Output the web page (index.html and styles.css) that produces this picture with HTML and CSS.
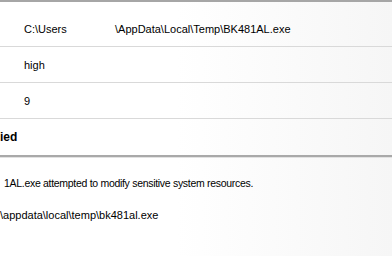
FILE: index.html
```html
<!DOCTYPE html>
<html lang="en">
<head>
  <meta charset="UTF-8">
  <title>Threat Details</title>
  <link rel="stylesheet" href="styles.css">
</head>
<body>

  <div class="details">
    <div class="row">
      <span class="path-user">C:\Users</span>
      <span class="path-rest">\AppData\Local\Temp\BK481AL.exe</span>
    </div>
    <div class="row">high</div>
    <div class="row">9</div>
    <div class="row status">ied</div>
  </div>

  <div class="desc">
    <p class="msg msg-event">1AL.exe attempted to modify sensitive system resources.</p>
    <p class="msg">\appdata\local\temp\bk481al.exe</p>
  </div>

</body>
</html>
```

FILE: styles.css
```css
* {
  box-sizing: border-box;
}

body {
  margin: 0;
  padding: 0;
  background: linear-gradient(to right, #ffffff 45%, #f6f6f6);
  color: #000;
  font-family: 'Liberation Sans', Arial, sans-serif;
  font-size: 11px;
}

.details {
  border-top: 2px solid #a6a6a6;
  border-bottom: 2px solid #a9a9a9;
  box-shadow: 0 1px 0 #e2e2e2;
  padding-top: 9px;
}

.row {
  display: flex;
  align-items: center;
  height: 36px;
  padding-left: 24px;
  border-bottom: 1px solid #d9d9d9;
}

.row:last-child {
  border-bottom: none;
  padding-left: 0;
}

.path-user {
  width: 91px;
}

.status {
  font-weight: bold;
  font-size: 12px;
}

.desc {
  padding-top: 19px;
}

.msg {
  margin: 0 0 18px;
  line-height: 14px;
}

.msg-event {
  font-size: 10.5px;
  letter-spacing: -0.3px;
  padding-left: 4px;
}
```
